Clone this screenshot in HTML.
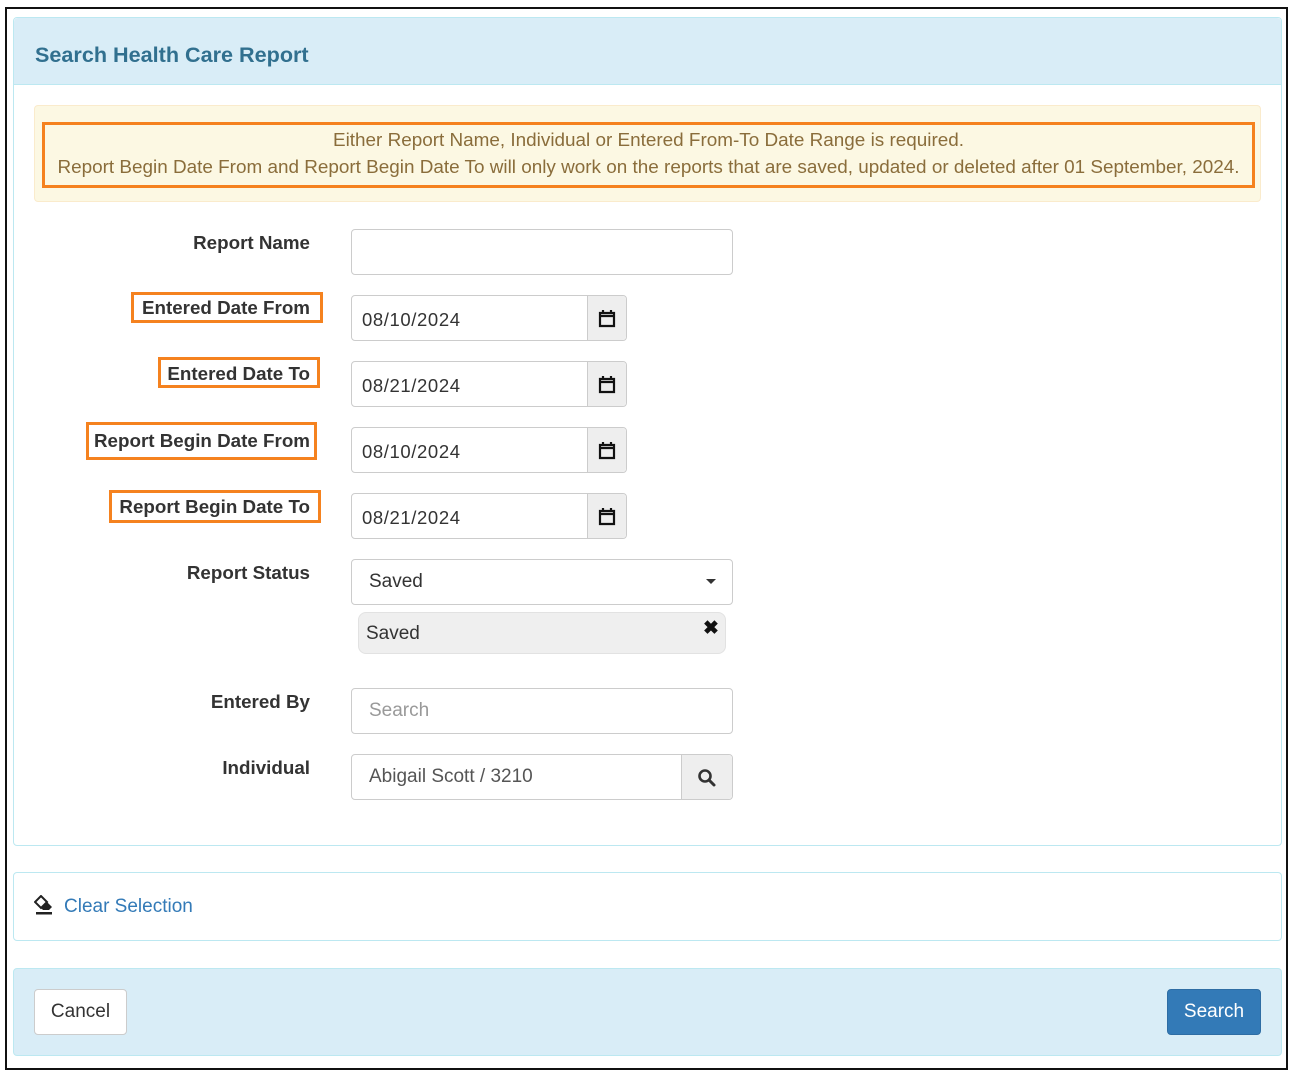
<!DOCTYPE html>
<html><head><meta charset="utf-8"><style>
*{box-sizing:border-box;margin:0;padding:0}
body{width:1294px;height:1075px;background:#fff;font-family:"Liberation Sans",Arial,sans-serif;position:relative;overflow:hidden;color:#333}
.a{position:absolute}
.frame{left:5px;top:7px;width:1283px;height:1063px;border:2px solid #111}
.panel{border:1px solid #bce8f1;border-radius:4px;background:#fff}
.hdr{background:#d9edf7}
.lbl{font-weight:bold;font-size:18.8px;text-align:right;right:984px;color:#333;white-space:nowrap}
.ob{border:3px solid #f5821f}
.inp{border:1px solid #ccc;border-radius:4px;background:#fff;font-size:19px;padding-left:17px;display:flex;align-items:center}
.date{border:1px solid #ccc;border-radius:4px;height:46px;width:276px;left:351px;font-size:18.5px;background:#fff}
.date span{position:absolute;left:10px;top:13px;letter-spacing:0.6px}
.date i{position:absolute;right:0;top:0;width:39px;height:44px;background:#eee;border-left:1px solid #ccc;border-radius:0 4px 4px 0}
.date svg{position:absolute;left:10px;top:12px}
</style></head><body>
<div class="a frame"></div>

<div class="a panel" style="left:13px;top:17px;width:1269px;height:829px"></div>
<div class="a hdr" style="left:14px;top:18px;width:1267px;height:67px;border-bottom:1px solid #bce8f1;border-radius:4px 4px 0 0"></div>
<div class="a" style="left:35px;top:42px;font-size:21.6px;font-weight:bold;color:#31708f">Search Health Care Report</div>

<div class="a" style="left:34px;top:105px;width:1227px;height:97px;background:#fcf8e3;border:1px solid #faebcc;border-radius:4px"></div>
<div class="a ob" style="left:42px;top:122px;width:1213px;height:66px"></div>
<div class="a" style="left:42px;top:127px;width:1213px;text-align:center;font-size:18.9px;line-height:27px;color:#8a6d3b">Either Report Name, Individual or Entered From-To Date Range is required.<br>Report Begin Date From and Report Begin Date To will only work on the reports that are saved, updated or deleted after 01 September, 2024.</div>

<div class="a lbl" style="top:232px">Report Name</div>
<div class="a inp" style="left:351px;top:229px;width:382px;height:46px"></div>

<div class="a ob" style="left:131px;top:292px;width:192px;height:31px"></div>
<div class="a lbl" style="top:297px">Entered Date From</div>
<div class="a date" style="top:295px"><span>08/10/2024</span><i><svg width="18" height="20" viewBox="0 0 18 20"><path d="M2 5h14v13H2zM2 8h14M5 2v4M13 2v4" fill="none" stroke="#111" stroke-width="2.2"/></svg></i></div>

<div class="a ob" style="left:158px;top:357px;width:162px;height:31px"></div>
<div class="a lbl" style="top:363px">Entered Date To</div>
<div class="a date" style="top:361px"><span>08/21/2024</span><i><svg width="18" height="20" viewBox="0 0 18 20"><path d="M2 5h14v13H2zM2 8h14M5 2v4M13 2v4" fill="none" stroke="#111" stroke-width="2.2"/></svg></i></div>

<div class="a ob" style="left:86px;top:422px;width:231px;height:38px"></div>
<div class="a lbl" style="top:430px">Report Begin Date From</div>
<div class="a date" style="top:427px"><span>08/10/2024</span><i><svg width="18" height="20" viewBox="0 0 18 20"><path d="M2 5h14v13H2zM2 8h14M5 2v4M13 2v4" fill="none" stroke="#111" stroke-width="2.2"/></svg></i></div>

<div class="a ob" style="left:109px;top:490px;width:212px;height:33px"></div>
<div class="a lbl" style="top:496px">Report Begin Date To</div>
<div class="a date" style="top:493px"><span>08/21/2024</span><i><svg width="18" height="20" viewBox="0 0 18 20"><path d="M2 5h14v13H2zM2 8h14M5 2v4M13 2v4" fill="none" stroke="#111" stroke-width="2.2"/></svg></i></div>

<div class="a lbl" style="top:562px">Report Status</div>
<div class="a inp" style="left:351px;top:559px;width:382px;height:46px">Saved</div>
<div class="a" style="left:706px;top:579px;width:0;height:0;border-left:5px solid transparent;border-right:5px solid transparent;border-top:5px solid #333"></div>
<div class="a" style="left:358px;top:612px;width:368px;height:42px;background:#efefef;border:1px solid #e2e2e2;border-radius:8px;font-size:19px;padding:10px 0 0 7px">Saved</div>
<div class="a" style="left:703px;top:617px;font-size:19px;font-weight:bold;color:#111">✖</div>

<div class="a lbl" style="top:691px">Entered By</div>
<div class="a inp" style="left:351px;top:688px;width:382px;height:46px;color:#999">Search</div>

<div class="a lbl" style="top:757px">Individual</div>
<div class="a inp" style="left:351px;top:754px;width:382px;height:46px;color:#555">Abigail Scott / 3210</div>
<div class="a" style="left:681px;top:755px;width:51px;height:44px;background:#eee;border-left:1px solid #ccc;border-radius:0 4px 4px 0"></div>
<svg class="a" style="left:697px;top:768px" width="20" height="20" viewBox="0 0 20 20"><circle cx="8" cy="8" r="5.5" fill="none" stroke="#333" stroke-width="2.6"/><path d="M12 12l5 5" stroke="#333" stroke-width="3" stroke-linecap="round"/></svg>

<div class="a panel" style="left:13px;top:872px;width:1269px;height:69px"></div>
<svg class="a" style="left:34px;top:895px" width="20" height="20" viewBox="0 0 20 20"><path d="M7 1L1 7l6 6 6-6z" fill="none" stroke="#222" stroke-width="2"/><path d="M7 13l6-6 5 5-3 3H9z" fill="#222"/><rect x="2" y="17" width="16" height="2.5" fill="#222"/></svg>
<div class="a" style="left:64px;top:896px;font-size:19px;color:#337ab7">Clear Selection</div>

<div class="a" style="left:13px;top:968px;width:1269px;height:88px;background:#d9edf7;border:1px solid #bce8f1;border-radius:4px"></div>
<div class="a" style="left:34px;top:989px;width:93px;height:46px;background:#fff;border:1px solid #ccc;border-radius:4px;font-size:19px;text-align:center;line-height:44px">Cancel</div>
<div class="a" style="left:1167px;top:989px;width:94px;height:46px;background:#337ab7;border:1px solid #2e6da4;border-radius:4px;font-size:19px;text-align:center;line-height:44px;color:#fff">Search</div>
</body></html>
